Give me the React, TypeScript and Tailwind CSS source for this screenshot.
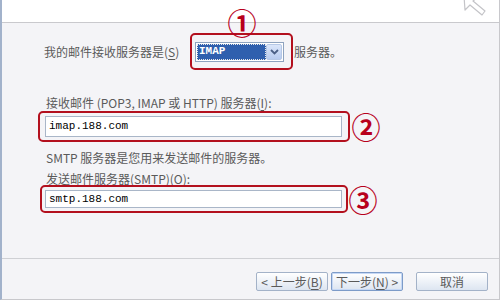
import React from 'react';

const CJK = "font-['Noto_Sans_CJK_SC','Noto_Sans',sans-serif]";
const MONO = "font-['Liberation_Mono','Noto_Sans_CJK_SC',monospace]";

/** Red numbered annotation glyph. */
function Mark({ n }: { n: string }) {
    return (
        <span
            className={`w-[26px] h-[26px] flex items-center justify-center ${CJK} text-[29px] leading-none font-bold text-[#b8001c]`}
        >
            {n}
        </span>
    );
}

/** Access key letter, underlined like a Win32 label. */
function Key({ k }: { k: string }) {
    return (
        <>
            (<span className="underline underline-offset-2">{k}</span>)
        </>
    );
}

/** Faint mouse pointer sitting over the header. */
function Cursor() {
    return (
        <svg className="absolute right-[8px] top-0" width="30" height="18" viewBox="0 0 30 18">
            <path
                d="M3 -4 L18 -4 L12 1 L24 11 L21 15 L9 5 L4 10 Z"
                fill="#ffffff"
                stroke="#c4c4c8"
                strokeWidth="1.2"
                strokeLinejoin="round"
            />
        </svg>
    );
}

function WizButton({ children, focused }: { children: React.ReactNode; focused?: boolean }) {
    return (
        <button
            className={`w-[72px] h-[19px] rounded-[2px] border text-[12px] leading-[17px] text-[#5a5a5a] bg-gradient-to-b from-white to-[#dde5f1] ${CJK} ${
                focused ? 'border-[#7d9bc8] shadow-[inset_0_0_0_1px_#c6d8f5]' : 'border-[#a3b2c8]'
            }`}
        >
            {children}
        </button>
    );
}

export default function App() {
    return (
        <div
            className={`relative w-[500px] h-[300px] flex flex-col bg-[#f4f4f7] border-l-2 border-l-[#a2b2cb] border-r border-r-[#c8c8cc] border-b border-b-[#c8c8cc] overflow-hidden ${CJK} text-[12px] text-[#5a5a5a]`}
        >
            {/* Header band */}
            <div className="h-[23px] bg-white border-b border-[#c9c9cd] shrink-0" />
            <Cursor />

            {/* Body */}
            <div className="flex flex-col pl-[36px]">
                {/* Row 1: receiving server type */}
                <div className="flex items-center mt-[10px] h-[37px]">
                    <span className="w-[152px] pl-[6px] leading-[16px] whitespace-nowrap">
                        我的邮件接收服务器是<Key k="S" />
                    </span>
                    <div className="relative w-[103px] h-[37px] rounded-[5px] border-2 border-[#b3101e] flex items-center pl-[3px]">
                        <div className="absolute left-[37px] -top-[26px]">
                            <Mark n="①" />
                        </div>
                        <div className="w-[89px] h-[20px] border border-[#8ea3bf] bg-white flex items-center">
                            <div className="ml-[1px] w-[70px] h-[16px] bg-[#2f5fae] outline-1 outline-dotted outline-[#e8e8e8] -outline-offset-1 flex items-center pl-[2px]">
                                <span className={`${MONO} text-[11px] font-bold text-white leading-none`}>IMAP</span>
                            </div>
                            <div className="ml-auto mr-[1px] w-[16px] h-[16px] rounded-[2px] border border-[#b6c8e6] bg-gradient-to-b from-[#dbe6fa] to-[#b7cbef] flex items-center justify-center">
                                <svg width="9" height="6" viewBox="0 0 9 6">
                                    <path d="M1 1 L4.5 4.5 L8 1" fill="none" stroke="#4a5f86" strokeWidth="1.8" />
                                </svg>
                            </div>
                        </div>
                    </div>
                    <span className="ml-[1px] leading-[16px]">服务器。</span>
                </div>

                {/* Row 2: incoming server */}
                <span className="mt-[25px] h-[16px] leading-[16px] pl-[8px] whitespace-nowrap">
                    接收邮件 (POP3, IMAP 或 HTTP) 服务器<Key k="I" />:
                </span>
                <div className="flex items-center gap-[3px]">
                    <div className="w-[312px] h-[31px] rounded-[5px] border-2 border-[#b3101e] flex items-center pl-[5px]">
                        <div className="w-[297px] h-[21px] border border-[#a9b6c8] bg-white flex items-center pl-[3px]">
                            <span className={`${MONO} text-[11px] text-black`}>imap.188.com</span>
                        </div>
                    </div>
                    <Mark n="②" />
                </div>

                {/* Row 3: outgoing server */}
                <span className="mt-[8px] h-[16px] leading-[16px] pl-[8px] whitespace-nowrap">
                    SMTP 服务器是您用来发送邮件的服务器。
                </span>
                <span className="mt-[5px] h-[16px] leading-[16px] pl-[8px] whitespace-nowrap">
                    发送邮件服务器(SMTP)<Key k="O" />:
                </span>
                <div className="-mt-[2px] ml-[2px] flex items-center gap-[2px]">
                    <div className="w-[308px] h-[28px] rounded-[5px] border-2 border-[#b3101e] flex items-center pl-[3px]">
                        <div className="w-[297px] h-[18px] border border-[#a9b6c8] bg-white flex items-center pl-[3px]">
                            <span className={`${MONO} text-[11px] text-black`}>smtp.188.com</span>
                        </div>
                    </div>
                    <Mark n="③" />
                </div>
            </div>

            {/* Footer buttons */}
            <div className="mt-auto h-[41px] border-t border-[#cfd0d4] flex justify-end items-start pt-[13px] pr-[11px]">
                <WizButton>
                    &lt; 上一步<Key k="B" />
                </WizButton>
                <div className="ml-[3px]">
                    <WizButton focused>
                        下一步<Key k="N" /> &gt;
                    </WizButton>
                </div>
                <div className="ml-[13px]">
                    <WizButton>取消</WizButton>
                </div>
            </div>
        </div>
    );
}
